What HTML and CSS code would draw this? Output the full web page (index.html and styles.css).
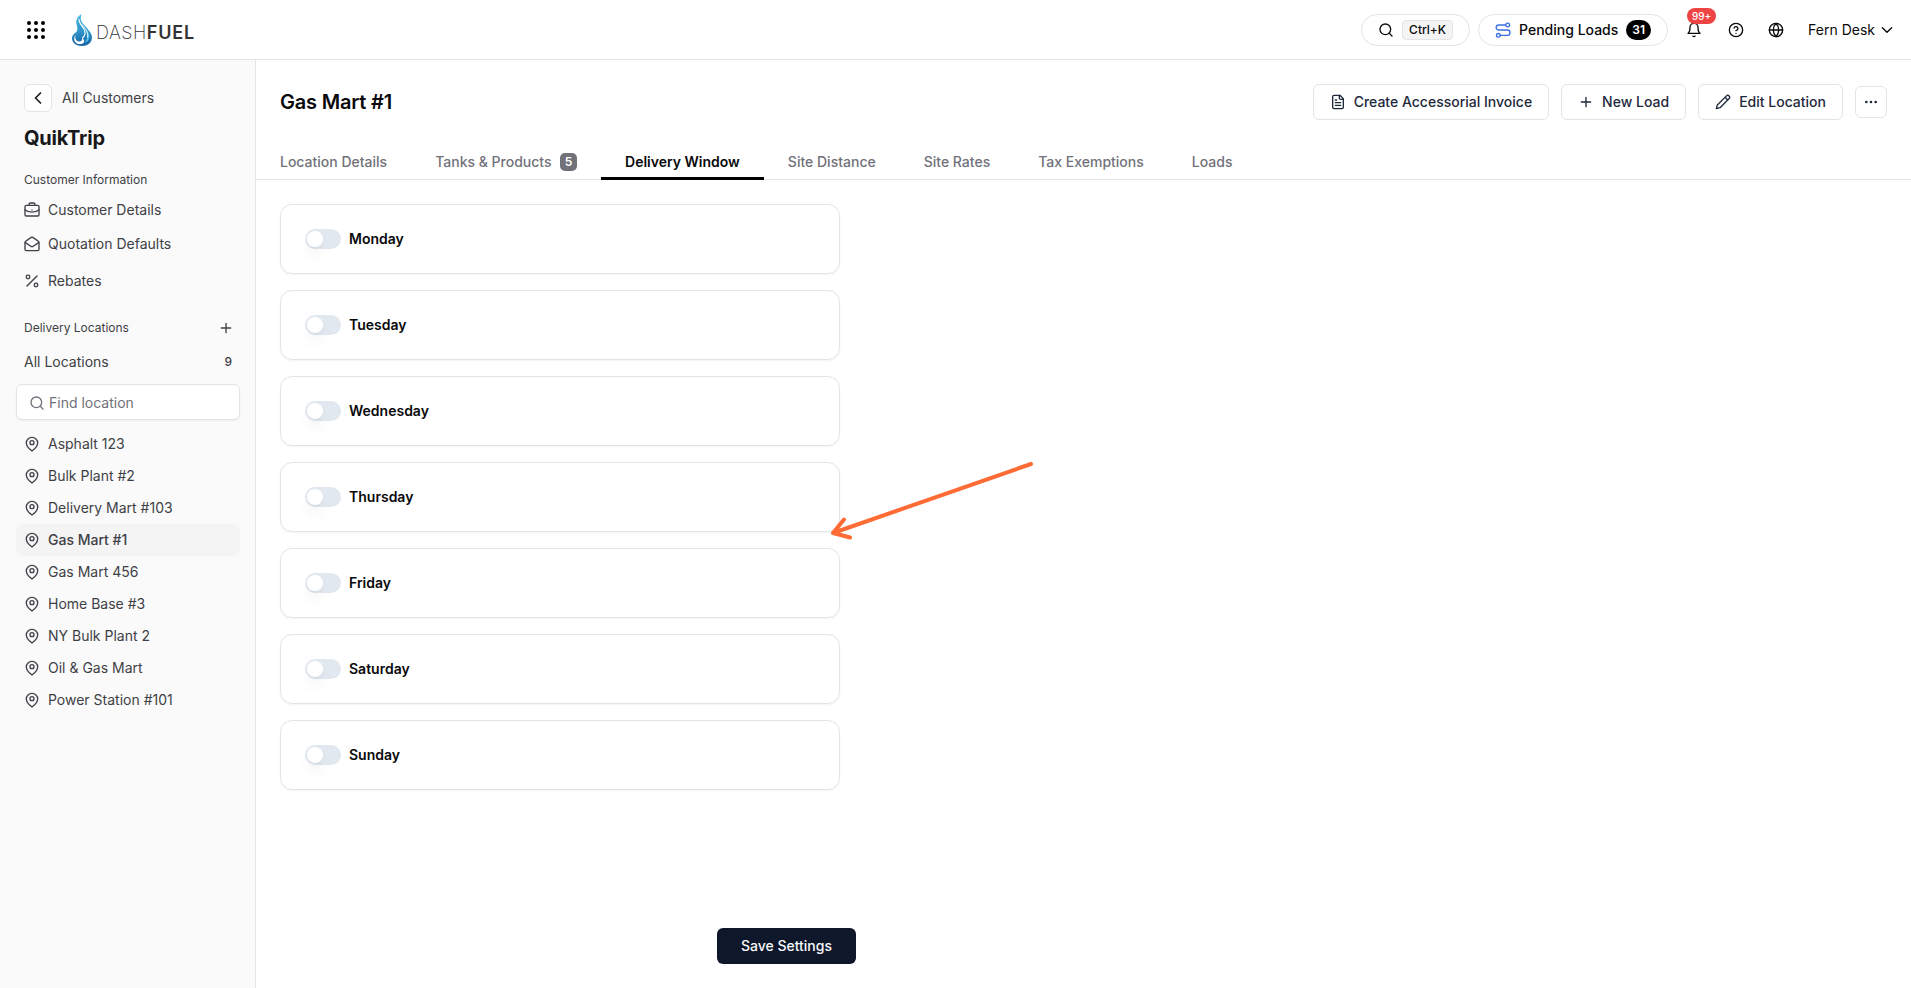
FILE: index.html
```html
<!DOCTYPE html>
<html lang="en">
<head>
  <meta charset="UTF-8">
  <title>Gas Mart #1 - Dashfuel</title>
  <link rel="stylesheet" href="styles.css">
</head>
<body>

<!-- shared icons -->
<svg class="sprite">
  <symbol id="i-search" viewBox="0 0 24 24"><circle cx="11" cy="11" r="8"/><path d="m21 21-4.3-4.3"/></symbol>
  <symbol id="i-plus" viewBox="0 0 24 24"><path d="M5 12h14M12 5v14"/></symbol>
  <symbol id="i-pin" viewBox="0 0 24 24"><path d="M20.500 10.500c0 6-8.500 12-8.500 12s-8.500-6-8.500-12a8.500 8.500 0 0 1 17 0Z"/><circle cx="12" cy="10" r="3"/></symbol>
</svg>

<header class="topbar">
  <svg class="apps" viewBox="0 0 18 18">
    <circle cx="2" cy="2" r="2"/><circle cx="9" cy="2" r="2"/><circle cx="16" cy="2" r="2"/>
    <circle cx="2" cy="9" r="2"/><circle cx="9" cy="9" r="2"/><circle cx="16" cy="9" r="2"/>
    <circle cx="2" cy="16" r="2"/><circle cx="9" cy="16" r="2"/><circle cx="16" cy="16" r="2"/>
  </svg>
  <div class="logo">
    <svg class="flame" viewBox="0 0 20 32">
      <defs>
        <linearGradient id="flame" x1="0" y1="0" x2="0" y2="1">
          <stop offset="0" stop-color="#4dbce6"/>
          <stop offset=".6" stop-color="#2b8fc6"/>
          <stop offset="1" stop-color="#1862a2"/>
        </linearGradient>
      </defs>
      <path fill="url(#flame)" d="M9.500 0C5.500 2.500 3.500 6 4.500 10c.6 3 1.500 4 .5 7C4 19 0 20 0 24.500 0 29 4.500 32 10 32s10-3.500 10-8.500c0-4-3-6.500-5.500-10C12 10.500 8.500 8 8.800 4c.1-1.500.3-2.500.7-4Z"/>
      <path fill="none" stroke="#fff" stroke-width="1.100" d="M7 5c-.5 5 5.500 8 6 13 .3 3-1 5-3 6"/>
      <path fill="#fff" d="M5.500 18.500C3 20.500 2 25 5.500 27c3 1.500 5.500-.5 4.500-3 3.500 2 2.500 5.500-1 6-4 .6-7-2-6.800-5.500.2-3 2-4.500 3.300-6Z"/>
      <path fill="#55c3e8" d="M11.500 12c4 4 6.500 8 5.500 12-.6 2.500-2 4-4 4.500 2.500-4 2.500-6.500 1.500-10-.6-2.500-2-4.500-3-6.500Z"/>
      <path fill="none" stroke="#fff" stroke-width=".8" d="M10 10.500c4 4.500 6.500 8.500 5.500 13"/>
    </svg>
    <span class="wordmark"><span class="dash">DASH</span><span class="fuel">FUEL</span></span>
  </div>

  <div class="topbar-right">
    <button class="pill search-pill">
      <svg class="icon icon16"><use href="#i-search"/></svg>
      <kbd>Ctrl+K</kbd>
    </button>
    <button class="pill loads-pill">
      <svg class="icon icon16 blue" viewBox="0 0 24 24"><circle cx="5" cy="20" r="2.800"/><circle cx="19" cy="4.500" r="2.800"/><path d="M16 4.500H5.500a3.750 3.750 0 0 0 0 7.500h13a4 4 0 0 1 0 8H8"/></svg>
      <span>Pending Loads</span>
      <span class="count">31</span>
    </button>
    <div class="bell">
      <svg class="icon icon16" viewBox="0 0 24 24"><path d="M6 8a6 6 0 0 1 12 0c0 7 3 9 3 9H3s3-2 3-9"/><path d="M10.300 21a1.940 1.940 0 0 0 3.400 0"/></svg>
      <span class="alert-count">99+</span>
    </div>
    <svg class="icon icon16 help" viewBox="0 0 24 24"><circle cx="12" cy="12" r="10"/><path d="M9.090 9a3 3 0 0 1 5.830 1c0 2-3 3-3 3M12 17h.01"/></svg>
    <svg class="icon icon16 globe" viewBox="0 0 24 24"><circle cx="12" cy="12" r="10"/><path d="M12 2a14.500 14.500 0 0 0 0 20 14.500 14.500 0 0 0 0-20M2 12h20"/></svg>
    <div class="user">
      <span>Fern Desk</span>
      <svg class="icon icon16" viewBox="0 0 24 24"><path d="m5 8.500 7 7 7-7"/></svg>
    </div>
  </div>
</header>

<div class="layout">
  <aside class="sidebar">
    <div class="back-row">
      <button class="back"><svg class="icon icon20" viewBox="0 0 24 24"><path d="m15 18-6-6 6-6"/></svg></button>
      <span>All Customers</span>
    </div>
    <h2>QuikTrip</h2>

    <h3>Customer Information</h3>
    <nav class="info-nav">
      <a><svg class="icon icon16" viewBox="0 0 24 24"><rect x="1.500" y="5" width="21" height="16" rx="2"/><path d="M7.500 5V3.500a2 2 0 0 1 2-2h5a2 2 0 0 1 2 2V5M1.500 11.500C7 16.500 17 16.500 22.500 11.500M12 12h.01"/></svg>Customer Details</a>
      <a><svg class="icon icon16" viewBox="0 0 24 24"><path d="M22.500 9.500V20a2 2 0 0 1-2 2h-17a2 2 0 0 1-2-2V9.500a2 2 0 0 1 .9-1.600L10.800 2a2.200 2.200 0 0 1 2.400 0l8.400 5.900a2 2 0 0 1 .9 1.600Z"/><path d="m22 10-8.800 5.700a2.200 2.200 0 0 1-2.400 0L2 10"/></svg>Quotation Defaults</a>
      <a class="rebates"><svg class="icon icon16" viewBox="0 0 24 24"><path d="M19.500 4.500 4.500 19.500"/><circle cx="6" cy="6" r="2.700"/><circle cx="18" cy="18" r="2.700"/></svg>Rebates</a>
    </nav>

    <div class="section-row">
      <h3>Delivery Locations</h3>
      <svg class="icon icon16"><use href="#i-plus"/></svg>
    </div>
    <div class="all-row"><span>All Locations</span><span class="num">9</span></div>
    <div class="find">
      <svg class="icon icon16"><use href="#i-search"/></svg>
      <input type="text" placeholder="Find location">
    </div>
    <ul class="locations">
      <li><svg class="icon icon16"><use href="#i-pin"/></svg>Asphalt 123</li>
      <li><svg class="icon icon16"><use href="#i-pin"/></svg>Bulk Plant #2</li>
      <li><svg class="icon icon16"><use href="#i-pin"/></svg>Delivery Mart #103</li>
      <li class="selected"><svg class="icon icon16"><use href="#i-pin"/></svg>Gas Mart #1</li>
      <li><svg class="icon icon16"><use href="#i-pin"/></svg>Gas Mart 456</li>
      <li><svg class="icon icon16"><use href="#i-pin"/></svg>Home Base #3</li>
      <li><svg class="icon icon16"><use href="#i-pin"/></svg>NY Bulk Plant 2</li>
      <li><svg class="icon icon16"><use href="#i-pin"/></svg>Oil &amp; Gas Mart</li>
      <li><svg class="icon icon16"><use href="#i-pin"/></svg>Power Station #101</li>
    </ul>
  </aside>

  <main>
    <div class="page-head">
      <h1>Gas Mart #1</h1>
      <div class="actions">
        <button class="btn"><svg class="icon icon16" viewBox="0 0 24 24"><path d="M15 2H6a2 2 0 0 0-2 2v16a2 2 0 0 0 2 2h12a2 2 0 0 0 2-2V7Z"/><path d="M14 2v4a2 2 0 0 0 2 2h4M10 9H8M16 13H8M16 17H8"/></svg>Create Accessorial Invoice</button>
        <button class="btn"><svg class="icon icon16"><use href="#i-plus"/></svg>New Load</button>
        <button class="btn"><svg class="icon icon16" viewBox="0 0 24 24"><path d="M17.200 2.800a2.830 2.830 0 0 1 4 4L7.500 20.500 2 22l1.500-5.500ZM15 5l4 4"/></svg>Edit Location</button>
        <button class="btn more"><svg class="icon icon16" viewBox="0 0 24 24"><circle cx="12" cy="12" r="1"/><circle cx="19" cy="12" r="1"/><circle cx="5" cy="12" r="1"/></svg></button>
      </div>
    </div>

    <div class="tabs">
      <a>Location Details</a>
      <a>Tanks &amp; Products <span class="tab-count">5</span></a>
      <a class="active">Delivery Window</a>
      <a>Site Distance</a>
      <a>Site Rates</a>
      <a>Tax Exemptions</a>
      <a>Loads</a>
    </div>

    <div class="days">
      <div class="day"><span class="switch"></span>Monday</div>
      <div class="day"><span class="switch"></span>Tuesday</div>
      <div class="day"><span class="switch"></span>Wednesday</div>
      <div class="day"><span class="switch"></span>Thursday</div>
      <div class="day"><span class="switch"></span>Friday</div>
      <div class="day"><span class="switch"></span>Saturday</div>
      <div class="day"><span class="switch"></span>Sunday</div>
    </div>

    <div class="save-row">
      <button class="save">Save Settings</button>
    </div>
  </main>
</div>

<svg class="arrow" viewBox="0 0 210 90">
  <path d="M206 9 8 78M19 64.500 8 78 25 82.500"/>
</svg>

</body>
</html>
```

FILE: styles.css
```css
* {
  box-sizing: border-box;
}
body {
  margin: 0;
  height: 988px;
  overflow: hidden;
  display: flex;
  flex-direction: column;
  font-family: Inter, "Liberation Sans", sans-serif;
  font-size: 14px;
  line-height: 20px;
  color: #09090b;
  background: #fff;
}
h1, h2, h3, ul {
  margin: 0;
  padding: 0;
}
button {
  font: inherit;
  color: inherit;
  background: #fff;
  cursor: pointer;
}
.sprite {
  display: none;
}
.icon {
  fill: none;
  stroke: currentColor;
  stroke-width: 2;
  stroke-linecap: round;
  stroke-linejoin: round;
  flex-shrink: 0;
}
.icon16 {
  width: 16px;
  height: 16px;
}
.icon20 {
  width: 20px;
  height: 20px;
}
.blue {
  color: #3b6fe0;
}

/* top bar */
.topbar {
  display: flex;
  align-items: center;
  height: 60px;
  padding: 0 16px 0 27px;
  border-bottom: 1px solid #e4e4e7;
  flex-shrink: 0;
}
.apps {
  width: 18px;
  height: 18px;
}
.logo {
  display: flex;
  align-items: center;
  margin-left: 27px;
}
.flame {
  width: 20px;
  height: 32px;
}
.wordmark {
  display: flex;
  margin: 7px 0 0 4px;
  font-size: 18px;
  color: #333;
}
.dash {
  font-weight: 200;
  letter-spacing: 0.5px;
}
.fuel {
  font-weight: 600;
  letter-spacing: 0.8px;
}
.topbar-right {
  display: flex;
  align-items: center;
  margin-left: auto;
}
.pill {
  display: flex;
  align-items: center;
  height: 32px;
  border: 1px solid #e4e4e7;
  border-radius: 16px;
  font-weight: 500;
}
.search-pill {
  width: 109px;
  padding: 0 16px;
  gap: 8px;
}
kbd {
  font-family: inherit;
  font-size: 12px;
  line-height: 18px;
  padding: 0 6px;
  border: 1px solid #e4e4e7;
  border-radius: 4px;
  background: #f4f4f5;
}
.loads-pill {
  width: 190px;
  margin-left: 8px;
  padding: 0 16px;
  gap: 8px;
}
.count {
  padding: 0 6px;
  border-radius: 10px;
  background: #000;
  color: #fff;
  font-size: 12px;
  font-weight: 600;
}
.bell {
  position: relative;
  display: flex;
  margin-left: 18px;
}
.alert-count {
  position: absolute;
  top: -14px;
  left: 1px;
  width: 29px;
  height: 16px;
  border-radius: 8px;
  background: #ef4444;
  color: #fff;
  font-size: 10px;
  line-height: 16px;
  font-weight: 500;
  text-align: center;
}
.help {
  margin-left: 26px;
}
.globe {
  margin-left: 24px;
}
.user {
  display: flex;
  align-items: center;
  gap: 4px;
  margin-left: 24px;
}

.layout {
  display: flex;
  flex: 1;
}

/* sidebar */
.sidebar {
  width: 256px;
  padding: 24px 15px 24px 16px;
  border-right: 1px solid #e4e4e7;
  background: #fafafa;
  color: #3f3f46;
}
.back-row {
  display: flex;
  align-items: center;
  gap: 10px;
  padding-left: 8px;
}
.back {
  display: flex;
  align-items: center;
  justify-content: center;
  width: 28px;
  height: 28px;
  padding: 0;
  border: 1px solid #e4e4e7;
  border-radius: 6px;
  color: #18181b;
}
.sidebar h2 {
  margin-top: 12px;
  padding-left: 8px;
  font-size: 20px;
  line-height: 28px;
  font-weight: 700;
  letter-spacing: -0.2px;
  color: #18181b;
}
.sidebar h3 {
  padding-left: 8px;
  margin-top: 18px;
  font-size: 12px;
  line-height: 20px;
  font-weight: 400;
}
.info-nav a {
  display: flex;
  align-items: center;
  gap: 8px;
  height: 34px;
  padding-left: 8px;
}
.info-nav {
  padding-top: 3px;
}
.info-nav .rebates {
  margin-top: 3px;
}
.section-row {
  display: flex;
  align-items: center;
  justify-content: space-between;
  margin-top: 20px;
  padding-right: 6px;
}
.section-row h3 {
  margin-top: 0;
}
.all-row {
  display: flex;
  justify-content: space-between;
  margin-top: 14px;
  padding: 0 8px;
}
.num {
  font-size: 12px;
  font-weight: 500;
}
.find {
  display: flex;
  align-items: center;
  gap: 4px;
  height: 36px;
  margin-top: 12px;
  padding: 1px 12px 0;
  border: 1px solid #e4e4e7;
  border-radius: 6px;
  background: #fff;
  box-shadow: 0 1px 2px rgba(0,0,0,0.05);
  color: #71717a;
}
.find input {
  width: 160px;
  padding: 0;
  border: none;
  outline: none;
  font: inherit;
}
.find input::placeholder {
  color: #71717a;
}
.locations {
  list-style: none;
  margin-top: 8px;
}
.locations li {
  display: flex;
  align-items: center;
  gap: 8px;
  height: 32px;
  padding-left: 8px;
  border-radius: 6px;
}
.locations .selected {
  background: #f4f4f5;
  font-weight: 500;
}

/* main */
main {
  flex: 1;
  display: flex;
  flex-direction: column;
}
.page-head {
  display: flex;
  align-items: center;
  justify-content: space-between;
  padding: 24px 24px 0;
}
h1 {
  font-size: 20px;
  line-height: 28px;
  font-weight: 600;
  letter-spacing: -0.2px;
}
.actions {
  display: flex;
  align-items: center;
  gap: 12px;
}
.btn {
  display: flex;
  align-items: center;
  gap: 8px;
  height: 36px;
  padding: 0 16px;
  border: 1px solid #e4e4e7;
  border-radius: 6px;
  font-weight: 500;
  color: #1e293b;
}
.more {
  justify-content: center;
  width: 32px;
  height: 32px;
  padding: 0;
}
.tabs {
  display: flex;
  height: 60px;
  padding-top: 24px;
  border-bottom: 1px solid #e4e4e7;
}
.tabs a {
  display: flex;
  align-items: center;
  height: 36px;
  padding: 2px 24px 0;
  border-bottom: 3px solid transparent;
  font-weight: 500;
  color: #71717a;
}
.tabs .active {
  border-color: #000;
  font-weight: 600;
  color: #09090b;
}
.tab-count {
  width: 17px;
  height: 18px;
  margin-left: 8.5px;
  border-radius: 5px;
  background: #71717a;
  color: #fff;
  font-size: 12px;
  line-height: 18px;
  font-weight: 600;
  text-align: center;
}
.days {
  display: flex;
  flex-direction: column;
  gap: 16px;
  width: 560px;
  margin: 24px 0 0 24px;
}
.day {
  display: flex;
  align-items: center;
  gap: 8px;
  height: 70px;
  padding: 0 24px;
  border: 1px solid #e4e4e7;
  border-radius: 12px;
  box-shadow: 0 1px 2px rgba(0,0,0,0.05);
  font-weight: 600;
}
.switch {
  width: 36px;
  height: 20px;
  padding: 2px;
  border-radius: 10px;
  background: #e2e8f0;
}
.switch::before {
  content: "";
  display: block;
  width: 16px;
  height: 16px;
  border-radius: 50%;
  background: #fff;
  box-shadow: 0 10px 15px -3px rgba(0,0,0,0.1), 0 4px 6px -4px rgba(0,0,0,0.1);
}
.save-row {
  display: flex;
  justify-content: flex-end;
  width: 600px;
  margin-top: auto;
  padding-bottom: 24px;
}
.save {
  height: 36px;
  padding: 0 24px;
  border: none;
  border-radius: 6px;
  background: #0f172a;
  color: #f8fafc;
  font-weight: 500;
}

/* pointer drawn over the page */
.arrow {
  position: absolute;
  left: 825px;
  top: 455px;
  width: 210px;
  height: 90px;
  fill: none;
  stroke: #ff6b35;
  stroke-width: 4;
  stroke-linecap: round;
  stroke-linejoin: round;
}
```
